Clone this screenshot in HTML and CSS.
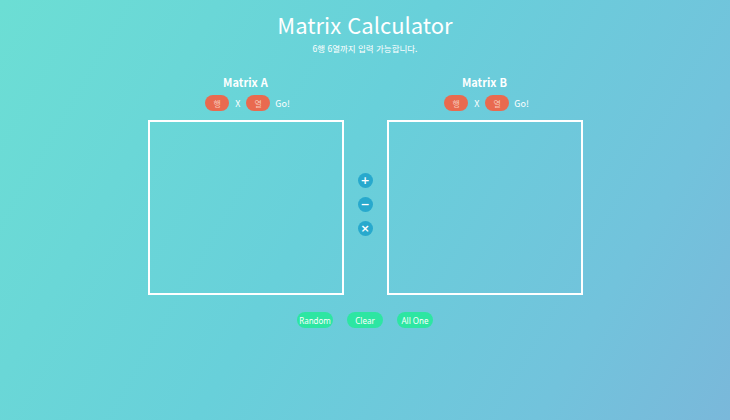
FILE: index.html
```html
<!DOCTYPE html>
<html lang="ko">
<head>
<meta charset="utf-8">
<title>Matrix Calculator</title>
<link rel="stylesheet" href="styles.css">
</head>
<body>
<main class="page">
  <h1 class="title">Matrix Calculator</h1>
  <p class="subtitle">6행 6열까지 입력 가능합니다.</p>
  <section class="calc">
    <div class="matrix">
      <h2 class="matrix-name">Matrix A</h2>
      <div class="size-row">
        <span class="pill">행</span>
        <span class="times">X</span>
        <span class="pill">열</span>
        <span class="go">Go!</span>
      </div>
      <div class="grid-box"></div>
    </div>
    <div class="ops">
      <span class="op">+</span>
      <span class="op">−</span>
      <span class="op">×</span>
    </div>
    <div class="matrix">
      <h2 class="matrix-name">Matrix B</h2>
      <div class="size-row">
        <span class="pill">행</span>
        <span class="times">X</span>
        <span class="pill">열</span>
        <span class="go">Go!</span>
      </div>
      <div class="grid-box"></div>
    </div>
  </section>
  <div class="actions">
    <span class="btn">Random</span>
    <span class="btn">Clear</span>
    <span class="btn">All One</span>
  </div>
</main>
</body>
</html>
```
FILE: styles.css
```css
* { box-sizing: border-box; }
html, body { margin: 0; height: 100%; }
body {
  background: linear-gradient(120deg, #6cded4 0%, #68d0da 45%, #72c3dc 80%, #7ab8da 100%);
  font-family: "Noto Sans CJK KR", "Noto Sans", sans-serif;
  color: #fff;
}
.page {
  display: flex;
  flex-direction: column;
  align-items: center;
  padding-top: 8px;
}
.title {
  margin: 0;
  font-size: 22px;
  font-weight: 400;
  line-height: 33px;
}
.subtitle {
  margin: 0;
  font-size: 8.5px;
  line-height: 12px;
  margin-top: 1px;
}
.calc {
  display: flex;
  align-items: flex-start;
  margin-top: 20px;
}
.matrix {
  display: flex;
  flex-direction: column;
  align-items: center;
  width: 196px;
}
.matrix-name {
  margin: 0;
  font-size: 11px;
  font-weight: 700;
  line-height: 16px;
}
.size-row {
  display: flex;
  align-items: center;
  height: 16px;
  margin-top: 5px;
  margin-left: 4px;
  font-size: 9px;
}
.pill {
  width: 24px;
  height: 16px;
  border-radius: 8px;
  background: #e96a4f;
  display: flex;
  align-items: center;
  justify-content: center;
  font-size: 8px;
  color: #f6c8b8;
}
.times { margin: 0 6px; font-size: 9px; }
.go { margin-left: 5px; font-size: 9px; }
.grid-box {
  width: 196px;
  height: 175px;
  border: 2px solid #fff;
  margin-top: 9px;
}
.ops {
  width: 43px;
  display: flex;
  flex-direction: column;
  align-items: center;
  gap: 9px;
  padding-top: 99px;
}
.op {
  width: 15px;
  height: 15px;
  border-radius: 50%;
  background: #28a9cd;
  display: flex;
  align-items: center;
  justify-content: center;
  font-size: 11px;
  font-weight: 700;
  line-height: 1;
  font-family: "DejaVu Sans", sans-serif;
}
.actions {
  display: flex;
  gap: 14px;
  margin-top: 17px;
}
.btn {
  width: 36px;
  height: 16px;
  border-radius: 8px;
  background: #2de6a2;
  display: flex;
  align-items: center;
  justify-content: center;
  font-size: 8px;
  font-family: "Noto Sans", sans-serif;
}
```
